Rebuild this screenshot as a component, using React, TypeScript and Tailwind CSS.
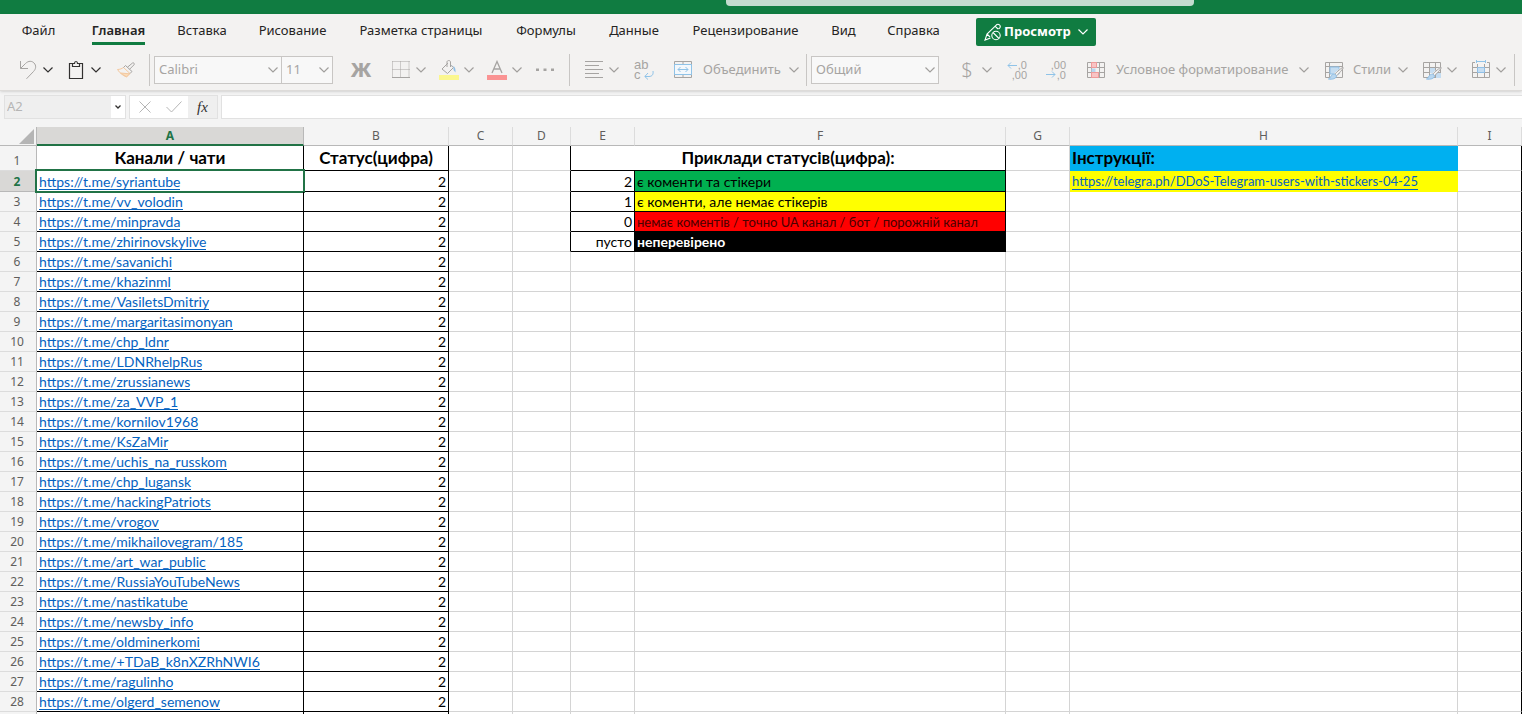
import { useState, type ReactNode } from "react";

const UI_FONT = "font-['Noto_Sans','Open_Sans',sans-serif]";
const CELL_FONT = "font-[Lato,'Noto_Sans',sans-serif]";

const tabs = [
  { name: "Файл", width: "w-[73px]" },
  { name: "Главная", width: "w-[87px]" },
  { name: "Вставка", width: "w-[80px]" },
  { name: "Рисование", width: "w-[101px]" },
  { name: "Разметка страницы", width: "w-[156px]" },
  { name: "Формулы", width: "w-[94px]" },
  { name: "Данные", width: "w-[82px]" },
  { name: "Рецензирование", width: "w-[141px]" },
  { name: "Вид", width: "w-[55px]" },
  { name: "Справка", width: "w-[85px]" },
];

const columns = [
  { name: "A", width: "w-[267px]" },
  { name: "B", width: "w-[145px]" },
  { name: "C", width: "w-[64px]" },
  { name: "D", width: "w-[58px]" },
  { name: "E", width: "w-[64px]" },
  { name: "F", width: "w-[371px]" },
  { name: "G", width: "w-[64px]" },
  { name: "H", width: "w-[388px]" },
  { name: "I", width: "" },
];

const channels = [
  "syriantube", "vv_volodin", "minpravda", "zhirinovskylive", "savanichi", "khazinml",
  "VasiletsDmitriy", "margaritasimonyan", "chp_ldnr", "LDNRhelpRus", "zrussianews",
  "za_VVP_1", "kornilov1968", "KsZaMir", "uchis_na_russkom", "chp_lugansk",
  "hackingPatriots", "vrogov", "mikhailovegram/185", "art_war_public",
  "RussiaYouTubeNews", "nastikatube", "newsby_info", "oldminerkomi",
  "+TDaB_k8nXZRhNWI6", "ragulinho", "olgerd_semenow",
];

const statuses = [
  { code: "2", text: "є коменти та стікери", style: "bg-[#00b050] text-black" },
  { code: "1", text: "є коменти, але немає стікерів", style: "bg-[#ffff00] text-black" },
  { code: "0", text: "немає коментів / точно UA канал / бот / порожній канал", style: "bg-[#ff0000] text-[13px] text-[#4a0000]" },
  { code: "пусто", text: "неперевірено", style: "bg-black text-white font-bold" },
];

const instructionsUrl = "https://telegra.ph/DDoS-Telegram-users-with-stickers-04-25";

const Chevron = ({ className = "text-[#a19f9d]" }: { className?: string }) => (
  <svg width="10" height="6" viewBox="0 0 10 6" fill="none" stroke="currentColor" strokeWidth="1.2" className={`shrink-0 ${className}`}>
    <path d="M0.5 0.5L5 5L9.5 0.5" />
  </svg>
);

const Icon = ({ children }: { children: ReactNode }) => (
  <svg width="20" height="20" viewBox="0 0 20 20" fill="none" stroke="#a6a4a2" strokeWidth="1" className="shrink-0">
    {children}
  </svg>
);

const Tool = ({ label, className = "", drop, chevron, children }: any) => (
  <button type="button" aria-label={label} className={`flex h-7 shrink-0 items-center gap-[5px] ${className}`}>
    {children}
    {drop && <Chevron className={chevron} />}
  </button>
);

const Separator = ({ className }: { className: string }) => (
  <div className={`h-8 w-px shrink-0 bg-[#c8c6c4] ${className}`} />
);

const Combo = ({ label, value, className }: { label: string; value: string; className: string }) => (
  <div className={`relative h-7 shrink-0 border border-[#c8c6c4] bg-[#f8f8f8] ${className}`}>
    <select aria-label={label} className="h-full w-full appearance-none bg-transparent pl-1 text-[13px] text-[#a6a4a2] outline-none">
      <option>{value}</option>
    </select>
    <div className="pointer-events-none absolute inset-y-0 right-[3px] flex items-center">
      <Chevron />
    </div>
  </div>
);

// two short lines of text stacked inside a 20px icon
const StackedText = ({ text, className }: { text: string; className: string }) => (
  <span className={`w-5 whitespace-pre-line font-['Liberation_Sans',sans-serif] leading-[10px] ${className}`}>{text}</span>
);

const GridLines = () => (
  <path d="M1.5 2.5H18.5V17.5H1.5ZM1.5 7.5H18.5M1.5 12.5H18.5M5.5 2.5V17.5M13.5 2.5V17.5" />
);

const StyleBrush = () => (
  <>
    <path d="M19.5 8L12 15.5L9.5 14L17 7.5Z" fill="#f3f2f1" stroke="none" />
    <path d="M19.2 7.6C19.8 8.2 14 14.5 12.6 15.8L10.8 14.2C12 12.6 18.5 6.8 19.2 7.6Z" fill="#f3f2f1" />
    <path d="M10.8 14.2L12.6 15.8C12.5 18.5 8 19.8 4.5 19C7 18 6.5 14 10.8 14.2Z" fill="#b9d7ef" stroke="#8fbfe6" />
  </>
);

function Toolbar() {
  return (
    <div className="flex h-10 items-center pl-[18px] text-[13px] text-[#a6a4a2]">
      <Tool label="Отменить" drop chevron="text-[#323130]">
        <Icon><path d="M2.5 1V8.5H10M2.5 8.5L7.5 3.5C10.5 0.5 14 0.8 16 3C18.5 5.5 18 9 15.5 11.5L8.5 18.8" /></Icon>
      </Tool>
      <Tool label="Вставить" drop chevron="text-[#323130]" className="ml-[13px]">
        <Icon>
          <path d="M6.5 3.5H3.5V18.5H16.5V3.5H13.5M6.5 3.5V6.5H13.5V3.5H11.5C11.5 0.8 8.5 0.8 8.5 3.5H6.5" stroke="#323130" strokeWidth="1.2" />
        </Icon>
      </Tool>
      <Tool label="Формат по образцу" className="ml-[15px]">
        <Icon>
          <path d="M1.5 9.5C4 9.5 6 8.5 7.5 7.5L14 13.5L10.5 17C7 15.5 3.5 13 1.5 9.5Z" stroke="#f3c9a0" />
          <path d="M4.5 13L13.5 13.8L10.5 16.8Z" fill="#fbdcb9" stroke="#f3c9a0" />
          <path d="M7.5 7.5L9.5 5.5L16 11.5L14 13.5M11.5 7.2L16.5 3C17.5 2.2 19 3.8 18 4.8L13.5 9.3" />
        </Icon>
      </Tool>
      <Separator className="ml-[13px]" />
      <Combo label="Шрифт" value="Calibri" className="ml-1 w-[128px]" />
      <Combo label="Размер шрифта" value="11" className="w-[51px] border-l-0" />
      <Tool label="Полужирный" className="ml-[18px] w-5 justify-center text-xl font-extrabold">Ж</Tool>
      <Tool label="Границы" drop className="ml-5">
        <Icon>
          <path d="M1.5 1.5H18.5M1.5 9.5H18.5M1.5 1.5V17M9.5 1.5V17M18 1.5V17" strokeDasharray="1 1" />
          <path d="M1 17.5H19" />
        </Icon>
      </Tool>
      <Tool label="Цвет заливки" drop className="ml-[13px]">
        <Icon>
          <path d="M0 15H20V20H0Z" fill="#fbf78f" stroke="none" />
          <path d="M9 3L3 9L8.5 13.5L14.5 7.5L11 4.5M8 7V2C8 0 11.5 0 11.5 2V7" />
          <path d="M12 6C15 5 17 8 16.5 12.5L14.5 10V6Z" fill="#8fbfe6" stroke="none" />
        </Icon>
      </Tool>
      <Tool label="Цвет шрифта" drop className="ml-[13px]">
        <Icon>
          <path d="M0 15H20V20H0Z" fill="#fa9393" stroke="none" />
          <path d="M5 13L10 1.5L15 13M6.7 9H13.3" strokeWidth="1.3" />
        </Icon>
      </Tool>
      <Tool label="Другие параметры" className="ml-[13px]">
        <Icon><path d="M1 8.5H4V11H1ZM8.5 8.5H11.5V11H8.5ZM16 8.5H19V11H16Z" fill="#a6a4a2" stroke="none" /></Icon>
      </Tool>
      <Separator className="ml-3.5" />
      <Tool label="Выравнивание" drop className="ml-3.5">
        <Icon><path d="M1 1.5H19M1 5.5H15M1 9.5H19M1 13.5H15M1 17.5H19" /></Icon>
      </Tool>
      <Tool label="Перенос текста" className="relative ml-[15px]">
        <StackedText text={"ab\nc"} className="text-left text-[13px]" />
        <svg width="10" height="9" viewBox="0 0 10 9" fill="none" stroke="#8fc3e8" className="absolute right-0 bottom-1">
          <path d="M9 0C9.5 3 8.5 5.5 5 5.5H1M4 2L0.8 5.5L4 8.5" />
        </svg>
      </Tool>
      <Tool label="Объединить" drop className="ml-[19px]">
        <Icon>
          <path d="M1.5 1.5H18.5V17.5H1.5ZM10 1.5V5M10 15V17.5" />
          <path d="M1.5 4.5H18.5V14.5H1.5ZM5 9.5H15M7.5 7L5 9.5L7.5 12M12.5 7L15 9.5L12.5 12" stroke="#8fc3e8" fill="#f3f8fc" />
        </Icon>
        <span className="ml-[5px] w-[81px] text-left">Объединить</span>
      </Tool>
      <Separator className="ml-[7px]" />
      <Combo label="Числовой формат" value="Общий" className="ml-1 w-[128px]" />
      <Tool label="Денежный формат" drop className="ml-[18px]">
        <span className="w-5 text-center text-xl font-light">$</span>
      </Tool>
      <Tool label="Увеличить разрядность" className="relative ml-[15px]">
        <StackedText text={",0\n,00"} className="text-right text-[11px]" />
        <svg width="10" height="7" viewBox="0 0 10 7" fill="none" stroke="#8fc3e8" className="absolute top-1.5 left-0">
          <path d="M10 3.5H1M4 0.5L1 3.5L4 6.5" />
        </svg>
      </Tool>
      <Tool label="Уменьшить разрядность" className="relative ml-[19px]">
        <StackedText text={",00\n,0"} className="text-right text-[11px]" />
        <svg width="10" height="7" viewBox="0 0 10 7" fill="none" stroke="#8fc3e8" className="absolute bottom-1.5 left-0">
          <path d="M0 3.5H9M6 0.5L9 3.5L6 6.5" />
        </svg>
      </Tool>
      <Tool label="Условное форматирование" drop className="ml-5">
        <Icon>
          <GridLines />
          <path d="M5.5 2.5H10.5V7.5H5.5ZM5.5 12.5H12.5V17.5H5.5Z" fill="#f8c4c4" stroke="#f09a9a" />
          <path d="M5.5 8.5H9.5V12H5.5Z" fill="#b9d7ef" stroke="none" />
        </Icon>
        <span className="ml-[5px] w-[178px] text-left">Условное форматирование</span>
      </Tool>
      <Tool label="Стили" drop className="ml-[15px]">
        <Icon>
          <path d="M1.5 2.5H18.5V17.5H1.5ZM1.5 6.5H18.5M1.5 12.5H6M5.5 2.5V17.5" />
          <path d="M6 7H15V14H6Z" fill="#c5ddf1" stroke="#8fbfe6" />
          <StyleBrush />
        </Icon>
        <span className="ml-1 w-10 text-left">Стили</span>
      </Tool>
      <Tool label="Стили ячеек" drop className="ml-3.5">
        <Icon>
          <path d="M1.5 2.5H18.5V17.5H1.5ZM1.5 7.5H18.5M1.5 12.5H18.5M7.5 2.5V17.5M13.5 2.5V17.5" />
          <path d="M8 8H13V13H8ZM14 13H19V18H14Z" fill="#c5ddf1" stroke="none" />
          <StyleBrush />
        </Icon>
      </Tool>
      <Tool label="Вставить ячейки" drop className="ml-3.5">
        <Icon>
          <path d="M1.5 2.5H18.5V17.5H1.5ZM1.5 7.5H18.5M1.5 12.5H18.5M6.5 2.5V17.5M13.5 2.5V17.5" />
          <path d="M6.5 7.5H13.5V12.5H6.5Z" fill="#c5ddf1" stroke="#8fbfe6" />
          <path d="M4 0H16V4H4Z" fill="#f3f2f1" stroke="none" />
          <path d="M5.5 1.5H14.5M5.5 0V3M14.5 0V3" stroke="#8fc3e8" />
        </Icon>
      </Tool>
      <Separator className="ml-2" />
    </div>
  );
}

function FormulaBar() {
  return (
    <div className="flex h-6 gap-[3px] pl-1">
      <div className="flex w-[122px] border border-[#e1e1e1] bg-[#efefef]">
        <input aria-label="Поле имени" defaultValue="A2" className="w-[106px] bg-transparent pl-0.5 text-[13px] text-[#b5b5b5] outline-none" />
        <button type="button" aria-label="Список имён" className="flex flex-1 items-center justify-center bg-white">
          <svg width="6" height="4" viewBox="0 0 6 4" fill="none" stroke="#323130" strokeWidth="1.3"><path d="M0.5 0.5L3 3L5.5 0.5" /></svg>
        </button>
      </div>
      <div className="flex w-[89px] border border-[#e1e1e1] bg-white">
        <button type="button" aria-label="Отмена" className="flex w-[30px] items-center justify-center">
          <svg width="12" height="12" viewBox="0 0 12 12" stroke="#b5b5b5"><path d="M0.5 0.5L11.5 11.5M11.5 0.5L0.5 11.5" /></svg>
        </button>
        <button type="button" aria-label="Ввод" className="flex w-7 items-center justify-center">
          <svg width="16" height="12" viewBox="0 0 16 12" fill="none" stroke="#b5b5b5"><path d="M0.5 6L5.5 11L15.5 0.5" /></svg>
        </button>
        <button type="button" className="flex-1 bg-[#efefef] font-['Liberation_Serif',serif] text-[15px] leading-5 text-[#323130] italic">fx</button>
      </div>
      <input aria-label="Строка формул" className="min-w-0 flex-1 border border-r-0 border-[#e1e1e1] bg-white px-1 outline-none" />
    </div>
  );
}

const RowHeader = ({ n, selected }: { n: number | string; selected?: boolean }) => (
  <th
    scope="row"
    className={`border-r border-b border-r-[#b8b8b8] p-0 pr-0.5 text-center align-bottom text-xs leading-[18px] ${UI_FONT} ${
      selected ? "border-b-[#b8b8b8] bg-[#d9d8d6] font-bold text-[#217346]" : "border-b-[#dcdcdc] bg-[#f4f4f4] font-normal text-[#605e5c]"
    }`}
  >
    {n}
  </th>
);

const Cell = ({ className = "", children }: any) => (
  <td className={`border-r border-b p-0 align-bottom whitespace-nowrap ${className}`}>{children}</td>
);

const CellLink = ({ href, className = "" }: { href: string; className?: string }) => (
  <a href={href} className={`mb-px block w-fit border-b border-[#0563c1] leading-[15px] text-[#0563c1] ${className}`}>{href}</a>
);

const PLAIN = "border-[#d4d4d4]";

function SheetRow({ index }: { index: number }) {
  const status = statuses[index];
  return (
    <tr className={index === 0 ? "h-[21px]" : "h-5"}>
      <RowHeader n={index + 2} selected={index === 0} />
      <Cell className="relative border-black px-0.5">
        <CellLink href={`https://t.me/${channels[index]}`} />
        {index === 0 && <div className="pointer-events-none absolute -inset-0.5 border-2 border-[#217346]" />}
      </Cell>
      <Cell className="border-black px-0.5 text-right">2</Cell>
      <Cell className={PLAIN} />
      <Cell className={status ? "border-r-black border-b-[#d4d4d4]" : PLAIN} />
      <Cell className={status ? "border-black px-0.5 text-right" : PLAIN}>{status?.code}</Cell>
      <Cell className={status ? `border-black px-0.5 ${status.style}` : PLAIN}>{status?.text}</Cell>
      <Cell className={PLAIN} />
      {index === 0 ? (
        <Cell className="border-[#ffff00] bg-[#ffff00] px-0.5">
          <CellLink href={instructionsUrl} className="text-[13px]" />
        </Cell>
      ) : (
        <Cell className={PLAIN} />
      )}
      <Cell className="border-r-black border-b-[#d4d4d4]" />
    </tr>
  );
}

function Sheet() {
  return (
    <table className={`w-full table-fixed border-separate border-spacing-0 bg-white text-sm leading-[18px] text-black ${CELL_FONT}`}>
      <colgroup>
        <col className="w-[37px]" />
        {columns.map((c) => <col key={c.name} className={c.width} />)}
      </colgroup>
      <thead>
        <tr className={`h-[19px] text-xs ${UI_FONT}`}>
          <th className="border-r border-b border-[#b8b8b8] bg-[#f4f4f4] p-0">
            <svg width="15" height="15" viewBox="0 0 15 15" className="ml-auto mr-0.5"><path d="M15 0V15H0Z" fill="#b5b5b5" /></svg>
          </th>
          {columns.map((c, i) => (
            <th
              key={c.name}
              scope="col"
              className={`border-r p-0 leading-4 ${
                i === 0
                  ? "border-b-2 border-r-[#b8b8b8] border-b-[#217346] bg-[#d9d8d6] font-bold text-[#217346]"
                  : "border-b border-r-[#dcdcdc] border-b-[#b8b8b8] bg-[#f4f4f4] font-normal text-[#605e5c]"
              }`}
            >
              {c.name}
            </th>
          ))}
        </tr>
      </thead>
      <tbody>
        <tr className="h-[25px] text-[17px] leading-6 font-bold">
          <RowHeader n={1} />
          <Cell className="border-black text-center">Канали / чати</Cell>
          <Cell className="border-black text-center">Статус(цифра)</Cell>
          <Cell className={PLAIN} />
          <Cell className="border-r-black border-b-[#d4d4d4]" />
          <td colSpan={2} className="border-r border-b border-black p-0 text-center">Приклади статусів(цифра):</td>
          <Cell className={PLAIN} />
          <Cell className="border-[#00b0f0] bg-[#00b0f0] px-0.5">Інструкції:</Cell>
          <Cell className="border-r-black border-b-[#d4d4d4]" />
        </tr>
        {channels.map((c, i) => <SheetRow key={c} index={i} />)}
        <tr className="h-5">
          <RowHeader n="" />
          {columns.map((c, i) => <Cell key={c.name} className={i < 2 || i === 8 ? "border-black" : PLAIN} />)}
        </tr>
      </tbody>
    </table>
  );
}

export default function App() {
  const [active, setActive] = useState("Главная");

  return (
    <div className={`flex h-screen flex-col overflow-hidden bg-[#f4f4f4] ${UI_FONT}`}>
      <header className="h-3.5 shrink-0 bg-[#107c41] pl-[726px]">
        <div className="h-1.5 w-[468px] rounded-b-sm bg-[#c4dccf]" />
      </header>

      <div className="relative shrink-0 border-b border-[#dddbd9] bg-[#f3f2f1] shadow-sm">
        <nav className="flex h-9 pl-0.5 text-[13px] text-[#252423]">
          {tabs.map((t) => (
            <button key={t.name} type="button" onClick={() => setActive(t.name)} className={`flex shrink-0 justify-center whitespace-nowrap ${t.width}`}>
              <span className={`mt-1 h-[27px] border-b-[3px] leading-6 ${active === t.name ? "border-[#107c41] font-semibold" : "border-transparent"}`}>
                {t.name}
              </span>
            </button>
          ))}
          <button type="button" className="mt-1 ml-5 flex h-7 w-[120px] shrink-0 items-center rounded-xs bg-[#107c41] pl-2 text-[13px] font-bold text-white">
            <svg width="18" height="18" viewBox="0 0 18 18" fill="none" stroke="currentColor" strokeWidth="1.1" className="shrink-0">
              <path d="M6.5 15L1 17L3 11L12.5 1.8C14.5 0.2 17.3 2.8 15.8 4.8L14.5 6M11 3.2L14 6M3 11L6 14" />
              <circle cx="12" cy="12.5" r="4.2" />
              <path d="M9 9.5L15 15.5" />
            </svg>
            <span className="ml-0.5">Просмотр</span>
            <Chevron className="mr-2 ml-auto text-white" />
          </button>
        </nav>
        <Toolbar />
      </div>

      <div className="shrink-0 pt-1 pb-2">
        <FormulaBar />
      </div>

      <main className="min-h-0 flex-1 overflow-hidden">
        <Sheet />
      </main>
    </div>
  );
}
